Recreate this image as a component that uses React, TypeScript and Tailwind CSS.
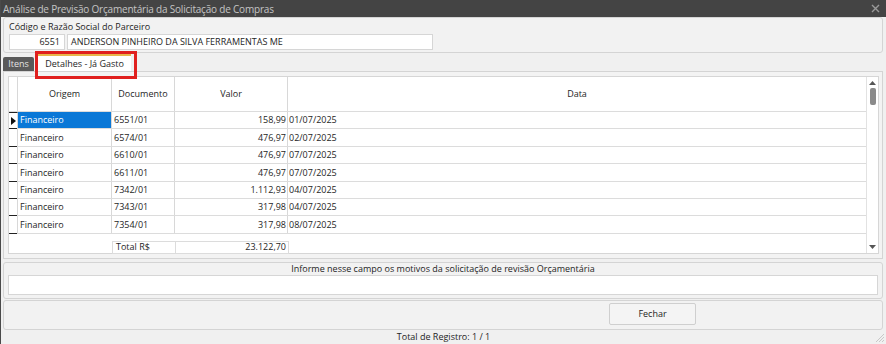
import React from "react";

const rows = [
  ["6551/01", "158,99", "01/07/2025"],
  ["6574/01", "476,97", "02/07/2025"],
  ["6610/01", "476,97", "07/07/2025"],
  ["6611/01", "476,97", "07/07/2025"],
  ["7342/01", "1.112,93", "04/07/2025"],
  ["7343/01", "317,98", "04/07/2025"],
  ["7354/01", "317,98", "08/07/2025"],
];

export default function App() {
  return (
    <div className="w-[886px] h-[344px] bg-[#f0f0f0] flex flex-col font-['Open_Sans',sans-serif] text-[9px] text-[#1e1e1e] border-l border-[#4a4a4a] relative overflow-hidden">
      {/* title bar */}
      <div className="h-[17px] bg-[#444444] flex items-center justify-between pl-[2px] pr-[6px] shrink-0">
        <span className="text-[10px] tracking-[-0.2px] text-[#c4c4c4] leading-none">Análise de Previsão Orçamentária da Solicitação de Compras</span>
        <svg width="9" height="9" viewBox="0 0 9 9" className="mb-[1px]">
          <path d="M1 1L8 8M8 1L1 8" stroke="#9a9a9a" strokeWidth="1.4" />
        </svg>
      </div>

      {/* partner panel */}
      <div className="ml-[2px] w-[880px] h-[36px] border border-[#d4d4d4] rounded-[3px] bg-[#f2f2f2] pl-[5px] pt-[3px] flex flex-col">
        <div className="leading-[12px] h-[12px]">Código e Razão Social do Parceiro</div>
        <div className="flex gap-[2px] mt-[1px]">
          <div className="w-[56px] h-[16px] bg-white border border-[#d6d6d6] flex items-center justify-end pr-[4px]">6551</div>
          <div className="w-[366px] h-[16px] bg-white border border-[#d6d6d6] flex items-center pl-[3px]">ANDERSON PINHEIRO DA SILVA FERRAMENTAS ME</div>
        </div>
      </div>

      {/* tabs */}
      <div className="ml-[2px] w-[880px] h-[18px] flex items-end gap-[4px] relative">
        <div className="w-[31px] h-[14px] bg-[#5a5a5a] rounded-t-[2px] text-[#e4e4e4] flex items-center justify-center">Itens</div>
        <div className="w-[93px] h-[17px] bg-white border-t-2 border-[#e8b64a] flex items-center justify-center">Detalhes - Já Gasto</div>
      </div>

      {/* tab panel */}
      <div className="ml-[2px] w-[880px] h-[188px] border border-[#d4d4d4] bg-[#f3f3f3] pl-[4px] pt-[4px]">
        <div className="w-[871px] h-[178px] bg-white border border-[#d6d6d6] flex">
          <div className="flex flex-col w-[857px]">
            {/* header */}
            <div className="flex h-[35px] border-b border-[#dcdcdc] shrink-0">
              <div className="w-[9px] border-r border-[#d8d8d8]" />
              <div className="w-[94px] border-r border-[#d8d8d8] flex items-center justify-center">Origem</div>
              <div className="w-[63px] border-r border-[#d8d8d8] flex items-center justify-center">Documento</div>
              <div className="w-[113px] border-r border-[#d8d8d8] flex items-center justify-center">Valor</div>
              <div className="flex-1 flex items-center justify-center">Data</div>
            </div>
            {rows.map((r, i) => (
              <div key={i} className="flex h-[17.4px] border-b border-[#dcdcdc] shrink-0">
                <div className={`w-[9px] border-r border-[#d8d8d8] relative ${i === 0 ? "border-t border-t-[#222]" : ""}`}>
                  <div className="absolute left-0 right-0 bottom-[-1px] h-px bg-[#222]" />
                  {i === 0 && (
                    <svg width="5" height="8" viewBox="0 0 5 8" className="absolute left-[2px] top-[4px]">
                      <path d="M0 0L5 4L0 8Z" fill="#111" />
                    </svg>
                  )}
                </div>
                <div className={`w-[94px] border-r border-[#d8d8d8] flex items-center pl-[2px] ${i === 0 ? "bg-[#0a78d7] text-white" : ""}`}>Financeiro</div>
                <div className="w-[63px] border-r border-[#d8d8d8] flex items-center pl-[2px]">{r[0]}</div>
                <div className="w-[113px] border-r border-[#d8d8d8] flex items-center justify-end pr-[1px]">{r[1]}</div>
                <div className="flex-1 flex items-center pl-[1px]">{r[2]}</div>
              </div>
            ))}
            <div className="flex mt-[7px] h-[13px]">
              <div className="w-[103px]" />
              <div className="w-[63px] border border-[#dcdcdc] border-r-0 flex items-center pl-[3px]">Total R$</div>
              <div className="w-[114px] border border-[#dcdcdc] flex items-center justify-end pr-[2px]">23.122,70</div>
            </div>
          </div>
          {/* scrollbar */}
          <div className="flex-1 border-l border-[#e2e2e2] flex flex-col items-center pt-[4px] pb-[4px]">
            <svg width="7" height="4" viewBox="0 0 7 4"><path d="M0 4L3.5 0L7 4Z" fill="#555" /></svg>
            <div className="w-[6px] h-[17px] bg-[#8a8a8a] rounded-[2px] mt-[3px]" />
            <div className="flex-1" />
            <svg width="7" height="4" viewBox="0 0 7 4"><path d="M0 0L3.5 4L7 0Z" fill="#555" /></svg>
          </div>
        </div>
      </div>

      {/* motives panel */}
      <div className="ml-[2px] mt-[3px] w-[880px] h-[37px] border border-[#d4d4d4] rounded-[3px] bg-[#f2f2f2] flex flex-col items-center px-[4px]">
        <div className="h-[12px] leading-[12px]">Informe nesse campo os motivos da solicitação de revisão Orçamentária</div>
        <div className="w-full h-[20px] bg-white border border-[#d6d6d6]" />
      </div>

      {/* button panel */}
      <div className="ml-[2px] mt-[1px] w-[880px] h-[30px] border border-[#d4d4d4] rounded-[3px] bg-[#f2f2f2] flex items-center">
        <div className="w-[87px] h-[22px] border border-[#cfcfcf] rounded-[2px] bg-[#f4f4f4] flex items-center justify-center ml-[605px] -mt-[3px]">Fechar</div>
      </div>

      {/* status */}
      <div className="flex-1 flex items-center justify-center">Total de Registro: 1 / 1</div>

      {/* resize grip */}
      <svg width="10" height="10" viewBox="0 0 10 10" className="absolute right-[1px] bottom-[1px]">
        <path d="M9 1L1 9M9 4L4 9M9 7L7 9" stroke="#c8c8c8" strokeWidth="1" />
      </svg>

      {/* annotation red box */}
      <div className="absolute left-[34px] top-[51px] w-[102px] h-[28px] border-[3px] border-[#e0201e]" />
    </div>
  );
}
